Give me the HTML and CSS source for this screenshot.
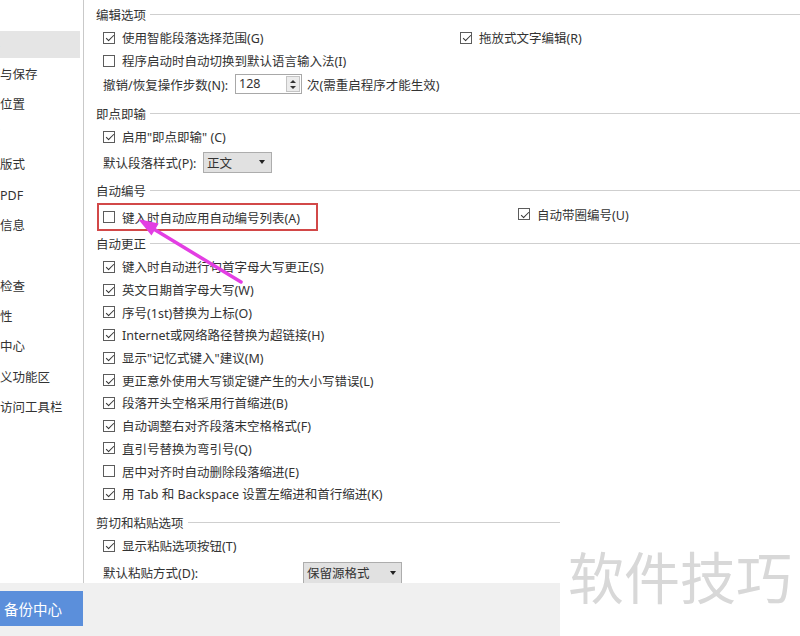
FILE: index.html
```html
<!DOCTYPE html>
<html lang="zh-CN">
<head>
<meta charset="utf-8">
<title>选项 - 编辑</title>
<link rel="stylesheet" href="styles.css">
</head>
<body>
<div class="top">
  <div class="sidebar">
    <div class="nav">
      <div class="nav-item">视图</div>
      <div class="nav-item selected">编辑</div>
      <div class="nav-item">常规与保存</div>
      <div class="nav-item">文件位置</div>
      <div class="nav-item">修订</div>
      <div class="nav-item">中文版式</div>
      <div class="nav-item">输出PDF</div>
      <div class="nav-item">用户信息</div>
      <div class="nav-item">打印</div>
      <div class="nav-item">拼写检查</div>
      <div class="nav-item">安全性</div>
      <div class="nav-item">信任中心</div>
      <div class="nav-item">自定义功能区</div>
      <div class="nav-item">快速访问工具栏</div>
    </div>
  </div>
  <div class="content">
    <div class="sec s1">编辑选项</div>
    <div class="row r1">
      <div class="col1"><span class="cb on"></span>使用智能段落选择范围(G)</div>
      <div class="item"><span class="cb on"></span>拖放式文字编辑(R)</div>
    </div>
    <div class="row"><span class="cb"></span>程序启动时自动切换到默认语言输入法(I)</div>
    <div class="row tall">
      <span class="label-undo">撤销/恢复操作步数(N):</span>
      <div class="spin"><span class="val">128</span><span class="btns"><i class="up"></i><i class="down"></i></span></div>
      <span class="after-spin">次(需重启程序才能生效)</span>
    </div>

    <div class="sec s2">即点即输</div>
    <div class="row r4"><span class="cb on"></span>启用"即点即输" (C)</div>
    <div class="row tall r5">
      <span class="label-style">默认段落样式(P):</span>
      <div class="select sel-style"><span>正文</span><i class="caret"></i></div>
    </div>

    <div class="sec s3">自动编号</div>
    <div class="num-row">
      <div class="highlight"><span class="cb"></span>键入时自动应用自动编号列表(A)</div>
      <div class="item circle"><span class="cb on"></span>自动带圈编号(U)</div>
    </div>

    <div class="sec s4">自动更正</div>
    <div class="list">
      <div class="row"><span class="cb on"></span>键入时自动进行句首字母大写更正(S)</div>
      <div class="row"><span class="cb on"></span>英文日期首字母大写(W)</div>
      <div class="row"><span class="cb on"></span>序号(1st)替换为上标(O)</div>
      <div class="row"><span class="cb on"></span>Internet或网络路径替换为超链接(H)</div>
      <div class="row"><span class="cb on"></span>显示"记忆式键入"建议(M)</div>
      <div class="row"><span class="cb on"></span>更正意外使用大写锁定键产生的大小写错误(L)</div>
      <div class="row"><span class="cb on"></span>段落开头空格采用行首缩进(B)</div>
      <div class="row"><span class="cb on"></span>自动调整右对齐段落末空格格式(F)</div>
      <div class="row"><span class="cb on"></span>直引号替换为弯引号(Q)</div>
      <div class="row"><span class="cb"></span>居中对齐时自动删除段落缩进(E)</div>
      <div class="row"><span class="cb on"></span>用 Tab 和 Backspace 设置左缩进和首行缩进(K)</div>
    </div>

    <div class="sec s5">剪切和粘贴选项</div>
    <div class="row r-paste"><span class="cb on"></span>显示粘贴选项按钮(T)</div>
    <div class="row tall r-mode">
      <span class="label-paste">默认粘贴方式(D):</span>
      <div class="select sel-paste"><span>保留源格式</span><i class="caret"></i></div>
    </div>
  </div>
</div>
<div class="bottom">
  <div class="backup-btn">备份中心</div>
</div>

<div class="watermark">软件技巧</div>

<svg class="arrow" width="800" height="636" viewBox="0 0 800 636">
  <line x1="241" y1="282" x2="152" y2="228" stroke="#e33ee3" stroke-width="3.5" stroke-linecap="round"/>
  <polygon points="138,219 151.5,235.5 158.7,223.4" fill="#e33ee3"/>
</svg>
</body>
</html>
```

FILE: styles.css
```css
* { box-sizing: border-box; }

html, body {
  margin: 0;
  padding: 0;
}

body {
  width: 800px;
  height: 636px;
  overflow: hidden;
  position: relative;
  background: #ffffff;
  font-family: "Noto Sans", "Noto Sans CJK SC", sans-serif;
  font-size: 12.5px;
  color: #333333;
}

.top {
  display: flex;
  height: 583px;
  background: #ffffff;
}

/* ---------- sidebar ---------- */
.sidebar {
  width: 84px;
  flex: none;
  padding-right: 3px;
  border-right: 1px solid #c9c9c9;
  overflow: hidden;
}

.nav {
  display: flex;
  flex-direction: column;
  gap: 4px;
  padding-top: 1px;
}

.nav-item {
  width: 80px;
  height: 26.3px;
  line-height: 26.3px;
  white-space: nowrap;
  overflow: hidden;
  text-indent: -25px;
}

.nav-item.selected {
  background: #e5e5e5;
}

/* ---------- content ---------- */
.content {
  flex: 1;
  padding-left: 12px;
  padding-top: 5px;
  overflow: hidden;
}

.sec {
  display: flex;
  align-items: center;
  height: 18px;
  white-space: nowrap;
}

.sec::after {
  content: "";
  flex: 1;
  height: 1px;
  background: #cfcfcf;
  margin-left: 4px;
}

.s2 { margin-top: 8px; }
.s3 { margin-top: 7px; }
.s4 { margin-top: 3px; }
.s5 { margin-top: 8.8px; }

.row {
  display: flex;
  align-items: center;
  height: 23px;
  padding-left: 7px;
  white-space: nowrap;
}

.row.tall { height: 24px; }

.r1 { margin-top: 3px; }
.r4 { margin-top: 3px; }
.r5 { margin-top: 2px; }

.col1 {
  width: 357px;
  display: flex;
  align-items: center;
}

.item {
  display: flex;
  align-items: center;
}

.cb {
  width: 12px;
  height: 12px;
  border: 1px solid #5c5c5c;
  background: #ffffff;
  position: relative;
  flex: none;
  margin-right: 7px;
}

.cb.on::after {
  content: "";
  position: absolute;
  left: 3.5px;
  top: 0.5px;
  width: 3px;
  height: 7px;
  border: solid #333333;
  border-width: 0 1px 1px 0;
  transform: rotate(45deg);
}

/* spin box */
.label-undo { margin-right: 7px; }

.spin {
  width: 67px;
  height: 20px;
  border: 1px solid #a8a8a8;
  display: flex;
  align-items: stretch;
  background: #ffffff;
}

.spin .val {
  flex: 1;
  padding-left: 3px;
  line-height: 18px;
}

.spin .btns {
  width: 14px;
  margin: 1px;
  background: #ececec;
  border: 1px solid #c4c4c4;
  display: flex;
  flex-direction: column;
  align-items: center;
  justify-content: space-around;
  padding: 1px 0;
}

.spin .up {
  width: 0;
  height: 0;
  border-left: 3px solid transparent;
  border-right: 3px solid transparent;
  border-bottom: 3px solid #333333;
}

.spin .down {
  width: 0;
  height: 0;
  border-left: 3px solid transparent;
  border-right: 3px solid transparent;
  border-top: 3px solid #333333;
}

.after-spin { margin-left: 5px; }

/* selects */
.select {
  display: flex;
  align-items: center;
  justify-content: space-between;
  height: 21px;
  background: #e1e1e1;
  border: 1px solid #adadad;
  padding: 0 6px 0 3px;
}

.caret {
  width: 0;
  height: 0;
  border-left: 3px solid transparent;
  border-right: 3px solid transparent;
  border-top: 4px solid #222222;
}

.label-style { width: 100px; }
.sel-style { width: 69px; }

.label-paste { width: 200px; }
.sel-paste { width: 99px; height: 22px; padding-right: 5px; }

/* auto numbering row */
.num-row {
  display: flex;
  align-items: center;
  margin-top: 4px;
  height: 28px;
}

.highlight {
  width: 221px;
  height: 28px;
  margin-left: 1px;
  border: 2px solid #d24848;
  padding-left: 4px;
  display: flex;
  align-items: center;
  white-space: nowrap;
}

.circle {
  margin-left: 200px;
  margin-top: -6px;
}

/* list */
.list { margin-top: 3.5px; }
.list .row { height: 22.7px; }

.r-paste { margin-top: 2.5px; }
.r-mode { margin-top: 3.5px; }

/* ---------- bottom bar ---------- */
.bottom {
  height: 53px;
  background: #f0f0f0;
  padding-top: 8px;
}

.backup-btn {
  width: 83px;
  height: 35px;
  line-height: 35px;
  background: #5b8fdb;
  color: #ffffff;
  font-size: 14.5px;
  padding-left: 4px;
  font-family: "Noto Sans CJK SC", sans-serif;
}

/* ---------- overlays ---------- */
.watermark {
  position: absolute;
  left: 560px;
  top: 500px;
  width: 240px;
  height: 136px;
  background: #ffffff;
  padding-left: 8px;
  padding-top: 47px;
  font-family: "Noto Sans CJK SC", sans-serif;
  font-size: 56px;
  line-height: 56px;
  color: #d8d8d8;
  white-space: nowrap;
}

.arrow {
  position: absolute;
  left: 0;
  top: 0;
  pointer-events: none;
}
```
